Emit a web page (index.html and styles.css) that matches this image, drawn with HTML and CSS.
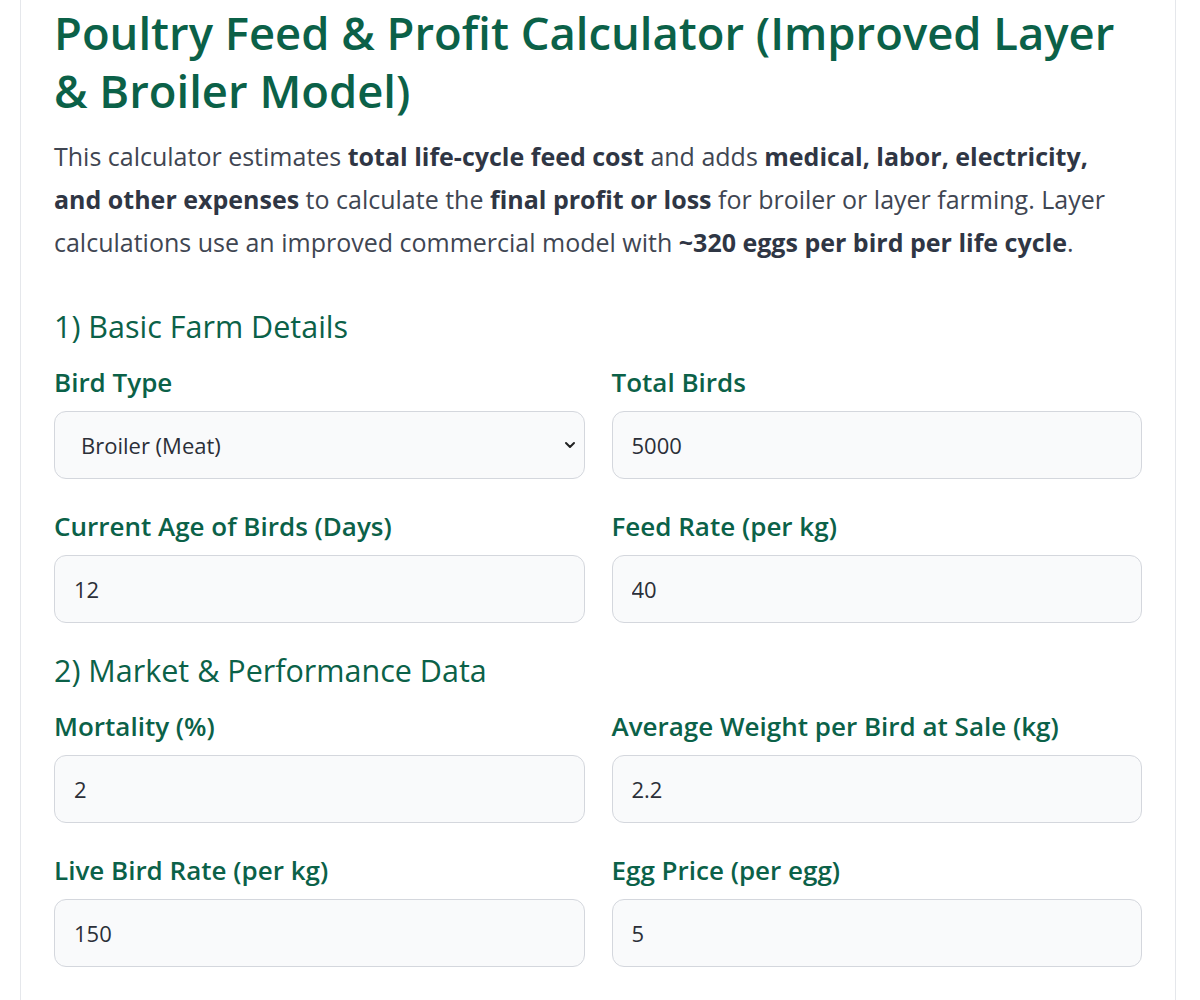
FILE: index.html
```html
<!DOCTYPE html>
<html lang="en">
<head>
    <meta charset="UTF-8">
    <meta name="viewport" content="width=device-width, initial-scale=1.0">
    <title>Poultry Feed &amp; Profit Calculator</title>
    <link rel="stylesheet" href="styles.css">
</head>
<body>
    <div class="calc-card">
        <h1>Poultry Feed &amp; Profit Calculator (Improved Layer &amp; Broiler Model)</h1>
        <p class="intro">
            This calculator estimates <strong>total life-cycle feed cost</strong> and adds
            <strong>medical, labor, electricity, and other expenses</strong> to calculate the
            <strong>final profit or loss</strong> for broiler or layer farming. Layer calculations
            use an improved commercial model with <strong>~320 eggs per bird per life cycle</strong>.
        </p>

        <!-- Basic details -->
        <h2>1) Basic Farm Details</h2>
        <div class="form-grid">
            <div class="field">
                <label for="birdType">Bird Type</label>
                <div class="select-wrap">
                    <select id="birdType">
                        <option value="broiler">Broiler (Meat)</option>
                        <option value="layer">Layer (Eggs)</option>
                    </select>
                    <svg class="chevron" viewBox="0 0 12 12" width="12" height="12">
                        <path d="M2 4l4 4 4-4" fill="none" stroke="#222" stroke-width="2" stroke-linecap="round" stroke-linejoin="round"/>
                    </svg>
                </div>
            </div>
            <div class="field">
                <label for="totalBirds">Total Birds</label>
                <input id="totalBirds" type="number" value="5000">
            </div>
            <div class="field">
                <label for="birdAge">Current Age of Birds (Days)</label>
                <input id="birdAge" type="number" value="12">
            </div>
            <div class="field">
                <label for="feedRate">Feed Rate (per kg)</label>
                <input id="feedRate" type="number" value="40">
            </div>
        </div>

        <!-- Market data -->
        <h2>2) Market &amp; Performance Data</h2>
        <div class="form-grid">
            <div class="field">
                <label for="mortality">Mortality (%)</label>
                <input id="mortality" type="number" value="2">
            </div>
            <div class="field">
                <label for="avgWeight">Average Weight per Bird at Sale (kg)</label>
                <input id="avgWeight" type="number" value="2.2">
            </div>
            <div class="field">
                <label for="liveRate">Live Bird Rate (per kg)</label>
                <input id="liveRate" type="number" value="150">
            </div>
            <div class="field">
                <label for="eggPrice">Egg Price (per egg)</label>
                <input id="eggPrice" type="number" value="5">
            </div>
        </div>
    </div>
</body>
</html>
```

FILE: styles.css
```css
body {
    margin: 0;
    background: #fff;
    font-family: "Open Sans", "Noto Sans", sans-serif;
    color: #374151;
}

.calc-card {
    width: 1088px;
    margin: -40px 0 0 20px;
    padding: 42px 33px 60px 33px;
    border: 1px solid #e5e7eb;
    border-radius: 12px;
    background: #fff;
}

h1 {
    margin: 0;
    font-size: 45.4px;
    line-height: 58px;
    font-weight: 600;
    color: #0b6148;
}

.intro {
    max-width: 1075px;
    margin: 16px 0 0;
    font-size: 25px;
    line-height: 43px;
    color: #3f4652;
}

.intro strong {
    color: #2f3644;
    font-weight: 700;
}

h2 {
    margin: 44px 0 20px;
    font-size: 30.5px;
    line-height: 36px;
    font-weight: 400;
    color: #0b6148;
}

.form-grid + h2 {
    margin-top: 29px;
}

.form-grid {
    display: grid;
    grid-template-columns: 1fr 1fr;
    column-gap: 27px;
    row-gap: 29px;
}

.field {
    display: flex;
    flex-direction: column;
}

.field label {
    font-size: 26px;
    line-height: 36px;
    font-weight: 600;
    color: #0b6148;
    margin-bottom: 11px;
}

.field input,
.field select {
    box-sizing: border-box;
    width: 100%;
    height: 68px;
    padding: 0 19px;
    font-family: inherit;
    font-size: 22px;
    color: #2b2f38;
    background: #f9fafb;
    border: 1px solid #d4d7dd;
    border-radius: 12px;
    outline: none;
}

.field input::-webkit-outer-spin-button,
.field input::-webkit-inner-spin-button {
    -webkit-appearance: none;
    margin: 0;
}

.select-wrap {
    position: relative;
}

.field select {
    appearance: none;
    -webkit-appearance: none;
    padding-left: 26px;
}

.chevron {
    position: absolute;
    right: 9px;
    top: 28px;
    pointer-events: none;
}
```
